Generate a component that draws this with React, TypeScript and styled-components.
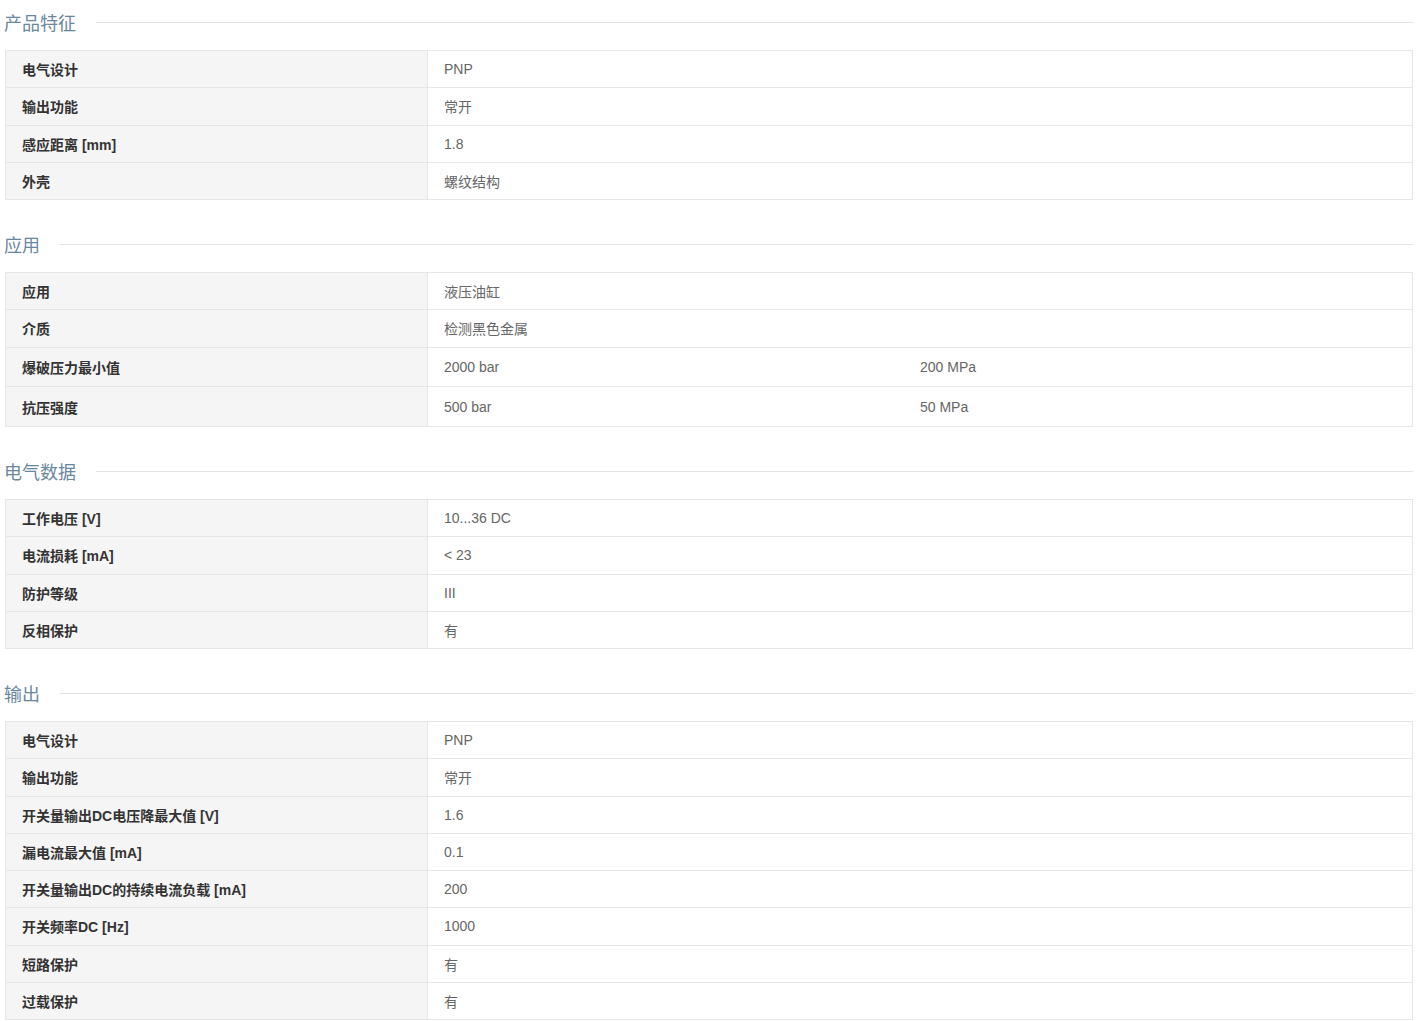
import React from 'react';
import styled, { createGlobalStyle } from 'styled-components';

type Row = { label: string, values: string[] }
type Group = { title: string, rows: Row[] }

const groups: Group[] = [
    {
        title: "产品特征",
        rows: [
            { label: "电气设计", values: ["PNP"] },
            { label: "输出功能", values: ["常开"] },
            { label: "感应距离 [mm]", values: ["1.8"] },
            { label: "外壳", values: ["螺纹结构"] },
        ],
    },
    {
        title: "应用",
        rows: [
            { label: "应用", values: ["液压油缸"] },
            { label: "介质", values: ["检测黑色金属"] },
            { label: "爆破压力最小值", values: ["2000 bar", "200 MPa"] },
            { label: "抗压强度", values: ["500 bar", "50 MPa"] },
        ],
    },
    {
        title: "电气数据",
        rows: [
            { label: "工作电压 [V]", values: ["10...36 DC"] },
            { label: "电流损耗 [mA]", values: ["< 23"] },
            { label: "防护等级", values: ["III"] },
            { label: "反相保护", values: ["有"] },
        ],
    },
    {
        title: "输出",
        rows: [
            { label: "电气设计", values: ["PNP"] },
            { label: "输出功能", values: ["常开"] },
            { label: "开关量输出DC电压降最大值 [V]", values: ["1.6"] },
            { label: "漏电流最大值 [mA]", values: ["0.1"] },
            { label: "开关量输出DC的持续电流负载 [mA]", values: ["200"] },
            { label: "开关频率DC [Hz]", values: ["1000"] },
            { label: "短路保护", values: ["有"] },
            { label: "过载保护", values: ["有"] },
        ],
    },
]

const GlobalStyle = createGlobalStyle`
    body {
        margin: 0;
        background: #ffffff;
        font-family: "Liberation Sans", "Noto Sans CJK SC", sans-serif;
    }
`

export default function App() {
    return (
        <Page>
            <GlobalStyle />
            {groups.map(group => (
                <Section key={group.title}>
                    <Heading>
                        <HeadingText>{group.title}</HeadingText>
                        <Rule />
                    </Heading>
                    <Table>
                        {group.rows.map(row => (
                            <TableRow key={row.label} tall={row.values.length > 1}>
                                <Label>{row.label}</Label>
                                {row.values.length > 1 ? (
                                    <>
                                        <Value>{row.values[0]}</Value>
                                        <Value>{row.values[1]}</Value>
                                    </>
                                ) : (
                                    <Value wide>{row.values[0]}</Value>
                                )}
                            </TableRow>
                        ))}
                    </Table>
                </Section>
            ))}
        </Page>
    )
}

const Page = styled.div`
    padding: 0 6px 0 5px;
    display: flex;
    flex-direction: column;
    gap: 22px;
`

const Section = styled.section`
    display: flex;
    flex-direction: column;
    gap: 6px;
`

const Heading = styled.div`
    height: 44px;
    display: flex;
    align-items: center;
    gap: 20px;
`

const HeadingText = styled.h2`
    margin: 0;
    font-size: 18px;
    font-weight: normal;
    color: #6a87a0;
    font-family: "Noto Sans CJK SC", sans-serif;
    line-height: 1;
    margin-left: -1px;
`

const Rule = styled.div`
    flex: 1;
    height: 1px;
    background: #e3e3e3;
`

const Table = styled.div`
    display: grid;
    grid-template-columns: 422px 476px 1fr;
    border: 1px solid #e6e6e6;
    border-bottom: none;
`

const TableRow = styled.div<{tall?: boolean}>`
    display: grid;
    grid-column: 1 / -1;
    grid-template-columns: subgrid;
    height: ${props => props.tall ? "39.75px" : "37.25px"};
    border-bottom: 1px solid #e6e6e6;
    box-sizing: border-box;
    font-size: 14px;
`

const Label = styled.div`
    display: flex;
    align-items: center;
    padding-left: 16px;
    background: #f5f5f5;
    border-right: 1px solid #e6e6e6;
    color: #333333;
    font-weight: bold;
`

const Value = styled.div<{wide?: boolean}>`
    display: flex;
    align-items: center;
    padding-left: 16px;
    color: #666666;
    grid-column: ${props => props.wide ? "2 / 4" : "auto"};
`
